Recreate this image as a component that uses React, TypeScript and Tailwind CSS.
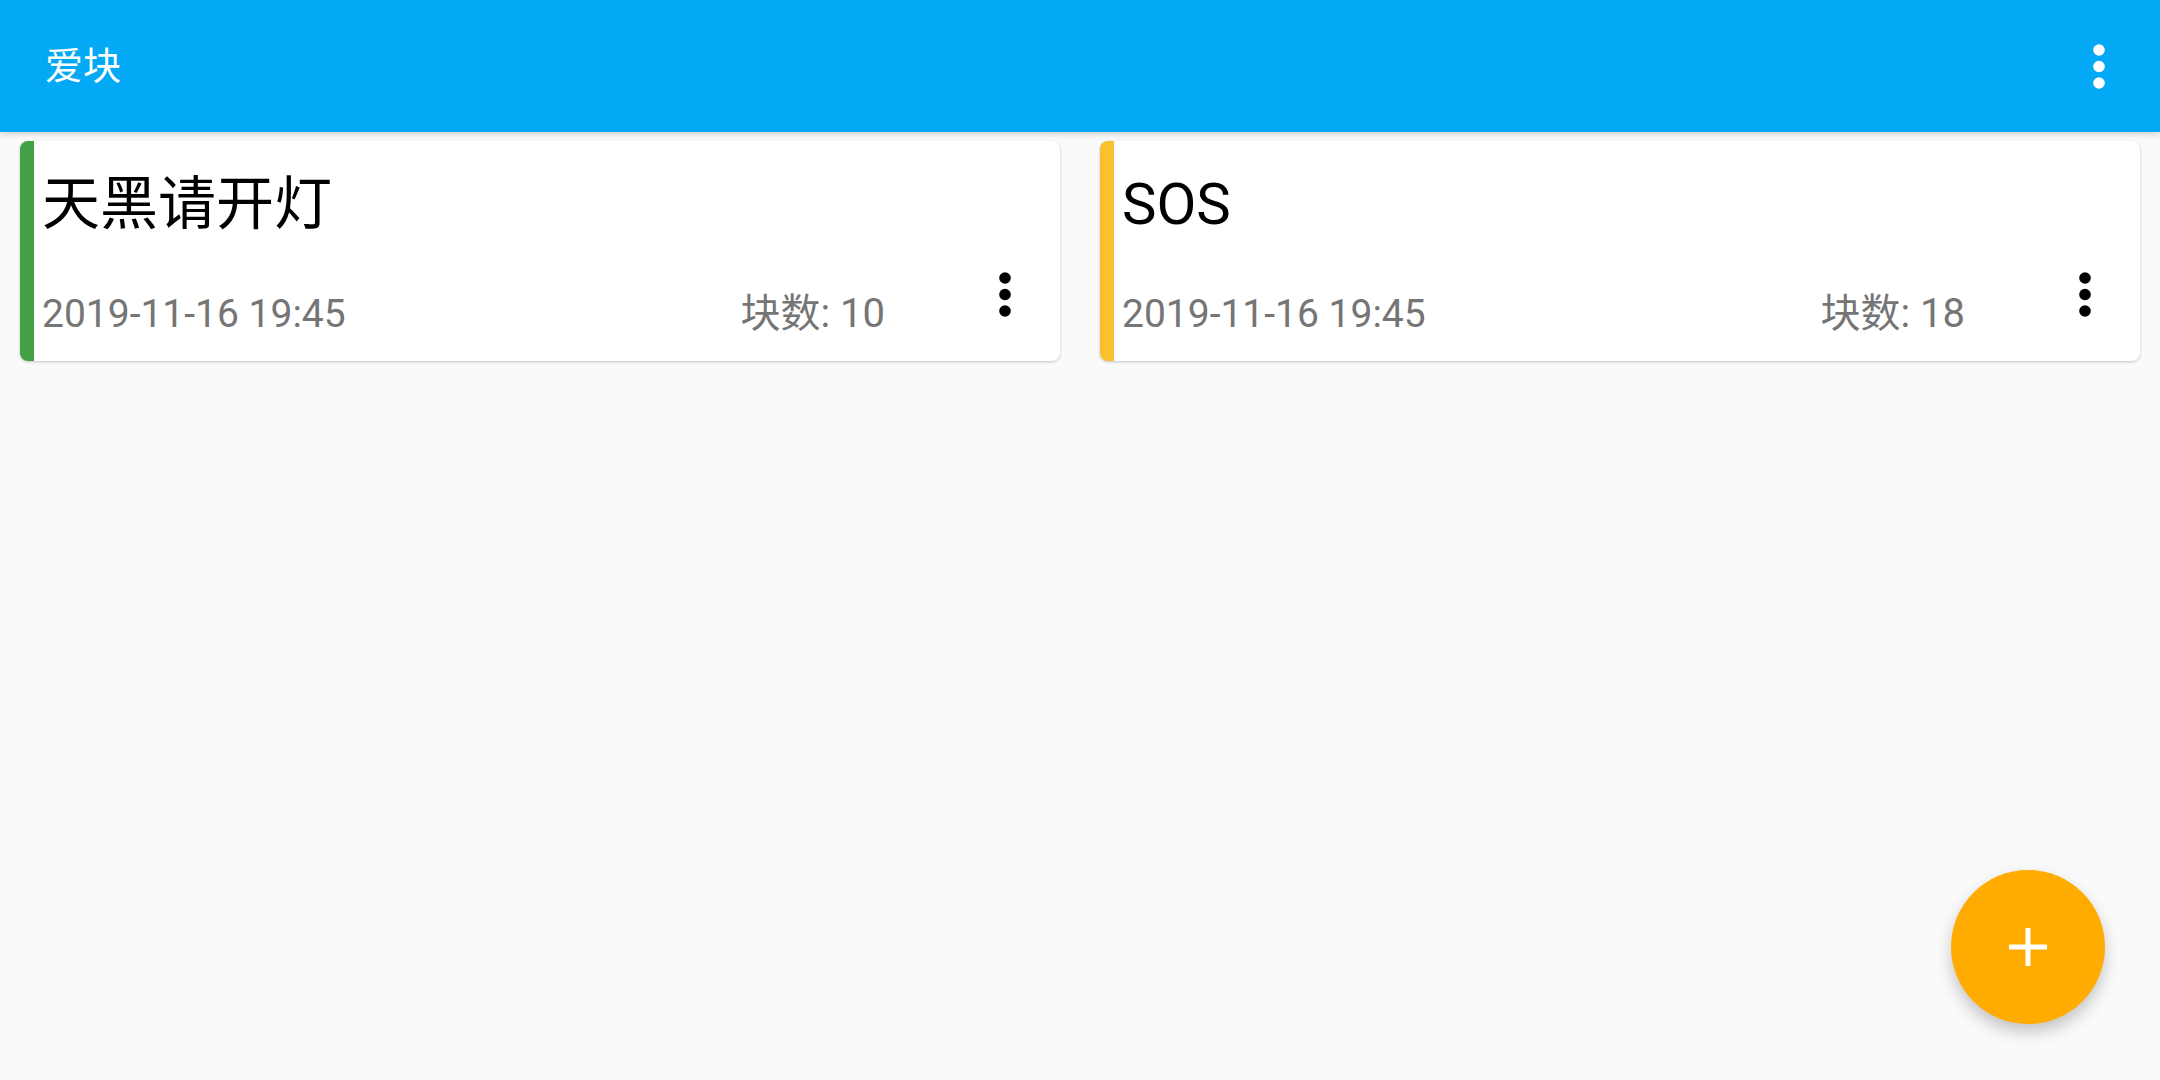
import React from 'react';

type Block = {
  title: string;
  date: string;
  count: number;
  strip: string;
};

const blocks: Block[] = [
  { title: '天黑请开灯', date: '2019-11-16 19:45', count: 10, strip: 'border-l-[#43a047]' },
  { title: 'SOS', date: '2019-11-16 19:45', count: 18, strip: 'border-l-[#fbc02d]' },
];

const Dots: React.FC<{ color: string }> = ({ color }) => (
  <svg width="12" height="45" viewBox="0 0 12 45" className={color}>
    <circle cx="6" cy="6" r="5.8" fill="currentColor" />
    <circle cx="6" cy="22.5" r="5.8" fill="currentColor" />
    <circle cx="6" cy="39" r="5.8" fill="currentColor" />
  </svg>
);

const BlockCard: React.FC<{ b: Block }> = ({ b }) => (
  <div className={`flex h-[220px] bg-white rounded-lg border-l-[14px] ${b.strip} shadow-[0_1px_3px_rgba(0,0,0,0.22)]`}>
    <div className="flex-1 flex flex-col pl-[8px] pr-[65px] pt-[34px]">
      <div className="text-[58px] leading-[58px] text-black whitespace-nowrap">{b.title}</div>
      <div className="mt-[61px] flex items-baseline leading-[40px] text-[#757575]">
        <span className="flex-1 text-[39px] whitespace-nowrap">{b.date}</span>
        <span className="text-[40px] whitespace-nowrap">块数: {b.count}</span>
      </div>
    </div>
    <div className="w-[110px] flex justify-center pt-[131px]">
      <Dots color="text-black" />
    </div>
  </div>
);

const App: React.FC = () => {
  return (
    <div
      className="h-screen w-full flex flex-col bg-[#fafafa] relative overflow-hidden"
      style={{ fontFamily: 'Roboto, "Noto Sans CJK SC", sans-serif' }}
    >
      <header className="h-[132px] bg-[#03a9f4] flex items-center justify-between pl-[45px] pr-[55px] relative z-10 shadow-[0_2px_6px_rgba(0,0,0,0.18)]">
        <h1 className="text-[38px] text-white font-normal">爱块</h1>
        <Dots color="text-white" />
      </header>

      <main className="flex-1 grid grid-cols-2 content-start gap-x-[40px] pt-[9px] px-[20px]">
        {blocks.map((b) => (
          <BlockCard key={b.title} b={b} />
        ))}
      </main>

      <button className="absolute right-[55px] bottom-[56px] w-[154px] h-[154px] rounded-full bg-[#ffab00] flex items-center justify-center shadow-[0_8px_16px_rgba(0,0,0,0.22)]">
        <svg width="40" height="40" viewBox="0 0 40 40">
          <path d="M20 1v38M1 20h38" stroke="white" strokeWidth="5" />
        </svg>
      </button>
    </div>
  );
};

export default App;
